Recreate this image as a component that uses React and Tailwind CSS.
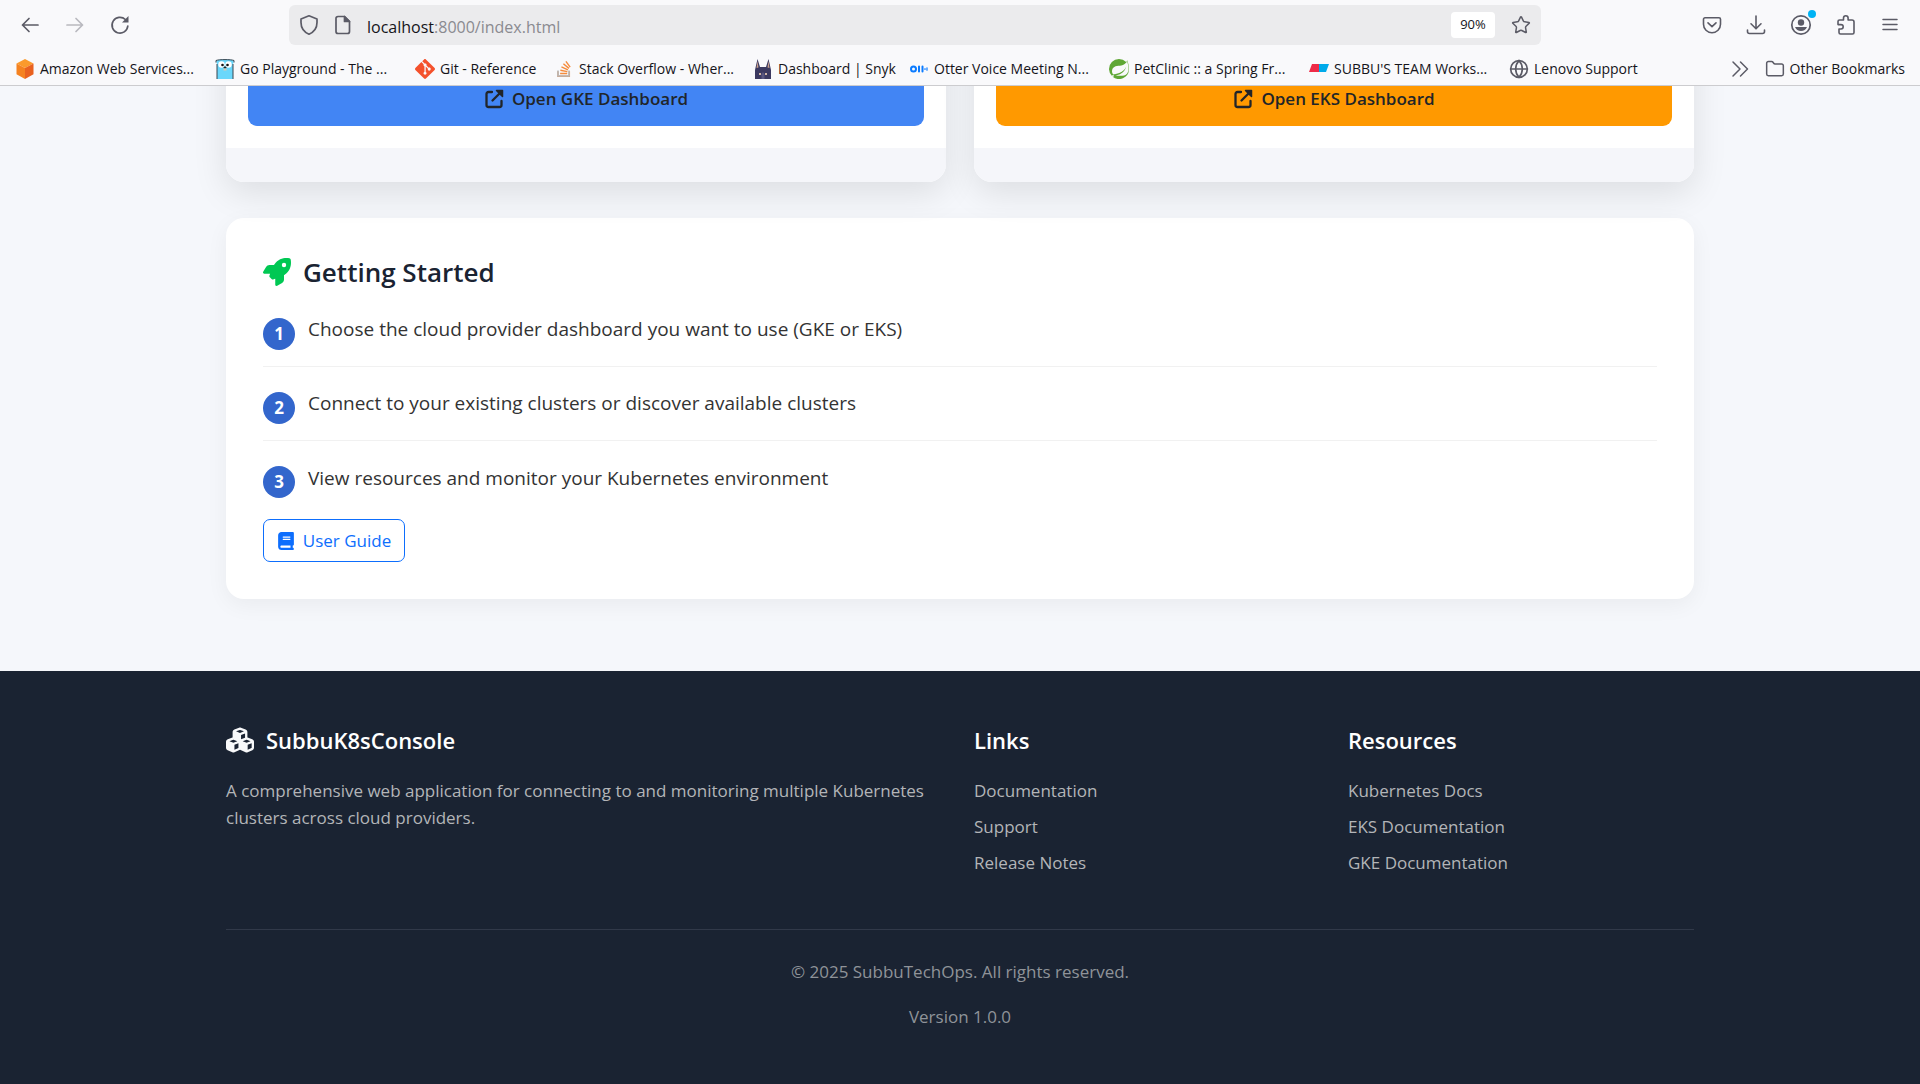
import { FaRocket, FaBook, FaCubes } from "react-icons/fa6";
import { SiGit, SiStackoverflow, SiSpring } from "react-icons/si";
import { Globe, Folder, Star } from "lucide-react";

const line = {
  fill: "none",
  stroke: "currentColor",
  strokeLinecap: "round",
  strokeLinejoin: "round",
};

function BackArrow() {
  return (
    <svg width="20" height="20" viewBox="0 0 20 20" {...line} strokeWidth="1.7">
      <path d="M9 3.5 2.5 10 9 16.5M2.5 10H18" />
    </svg>
  );
}

function ForwardArrow() {
  return (
    <svg width="20" height="20" viewBox="0 0 20 20" {...line} strokeWidth="1.7">
      <path d="m11 3.5 6.5 6.5-6.5 6.5M17.5 10H2" />
    </svg>
  );
}

function Reload() {
  return (
    <svg width="20" height="20" viewBox="0 0 20 20" {...line} strokeWidth="1.7">
      <path d="M17.8 11a7.9 7.9 0 1 1-2.400-6.500" />
      <path d="M18.500 1v6.500H12z" fill="currentColor" stroke="none" />
    </svg>
  );
}

function Shield() {
  return (
    <svg width="20" height="22" viewBox="0 0 20 22" {...line} strokeWidth="1.7">
      <path d="M10 1.8 18 5v3.5c0 5-3 9.5-8 11.7-5-2.200-8-6.700-8-11.700V5z" />
    </svg>
  );
}

function Page() {
  return (
    <svg width="16" height="20" viewBox="0 0 16 20" {...line} strokeWidth="1.7">
      <path d="M3 1.500h6.500l5 5V16.500a2 2 0 0 1-2 2H3a2 2 0 0 1-2-2v-13a2 2 0 0 1 2-2z" />
      <path d="M9.500 1.500v5h5z" fill="currentColor" />
    </svg>
  );
}

function Pocket() {
  return (
    <svg width="20" height="20" viewBox="0 0 20 20" {...line} strokeWidth="1.6">
      <path d="M3 2.800h14a1.500 1.500 0 0 1 1.500 1.500v5a8.500 8.500 0 0 1-17 0v-5A1.500 1.500 0 0 1 3 2.800z" />
      <path d="m6 7.800 4 3.800 4-3.800" />
    </svg>
  );
}

function Download() {
  return (
    <svg width="20" height="20" viewBox="0 0 20 20" {...line} strokeWidth="1.6">
      <path d="M10 1v12.500M5 8.800l5 5 5-5M1.500 15v1.500a2 2 0 0 0 2 2h13a2 2 0 0 0 2-2V15" />
    </svg>
  );
}

function Account() {
  return (
    <svg width="22" height="22" viewBox="0 0 22 22">
      <circle cx="11" cy="11" r="9.2" fill="none" stroke="currentColor" strokeWidth="1.7" />
      <circle cx="11" cy="8.500" r="3.200" fill="currentColor" />
      <path d="M5 13h12a6.500 6.500 0 0 1-12 0z" fill="currentColor" />
    </svg>
  );
}

function Puzzle() {
  return (
    <svg width="20" height="22" viewBox="0 0 20 22" {...line} strokeWidth="1.6">
      <path d="M3.500 6h4V4a2.300 2.300 0 0 1 4.600 0v2H16a2 2 0 0 1 2 2v10.500a1.500 1.500 0 0 1-1.500 1.500h-12A1.500 1.500 0 0 1 3 18.500V15h2a2.200 2.200 0 0 0 0-4.400H2V7.500A1.500 1.500 0 0 1 3.500 6z" />
    </svg>
  );
}

function Menu() {
  return (
    <svg width="16" height="16" viewBox="0 0 16 16" {...line} strokeWidth="1.500">
      <path d="M1 2.500h14M1 7.500h14M1 12.500h14" />
    </svg>
  );
}

function DoubleChevron() {
  return (
    <svg width="18" height="18" viewBox="0 0 18 18" {...line} strokeWidth="1.500">
      <path d="m2 2 7 7-7 7M9.500 2l7 7-7 7" />
    </svg>
  );
}

function OpenExternal() {
  return (
    <svg width="20" height="20" viewBox="0 0 20 20" {...line} strokeWidth="2.300">
      <path d="M8 3H4.500A2 2 0 0 0 2.500 5v11a2 2 0 0 0 2 2h11a2 2 0 0 0 2-2v-4" />
      <path d="M8.500 11.500 15 5" />
      <path d="M12.500 1.500h6v6z" fill="currentColor" strokeWidth="1.500" />
    </svg>
  );
}

function AwsCube() {
  return (
    <svg width="20" height="20" viewBox="0 0 20 20">
      <path d="M10 0 18.500 4.500 10 9 1.500 4.500z" fill="#fb9a2c" />
      <path d="M1.500 4.500 10 9v11l-8.500-4.800z" fill="#f58220" />
      <path d="M18.500 4.500 10 9v11l8.500-4.800z" fill="#e9611f" />
    </svg>
  );
}

function Gopher() {
  return (
    <svg width="20" height="20" viewBox="0 0 20 20">
      <path d="M1 1.500C3 0 17 0 19 1.500L18 5v15H2V5z" fill="#6ad7fb" />
      <path d="M1 3.500V1.500C4 .3 16 .3 19 1.500v2M2 5v15M18 5v15" fill="none" stroke="#39454f" />
      <circle cx="6.500" cy="5.500" r="3.200" fill="#fff" />
      <circle cx="13.500" cy="5.500" r="3.200" fill="#fff" />
      <circle cx="7.500" cy="6" r="1.300" fill="#111" />
      <circle cx="12.500" cy="6" r="1.300" fill="#111" />
      <ellipse cx="10" cy="8.500" rx="1.500" ry="1" fill="#222" />
      <path d="M8.500 9.500h3v2h-3z" fill="#d8cbb5" />
    </svg>
  );
}

function SnykDog() {
  return (
    <svg width="18" height="20" viewBox="0 0 18 20">
      <path d="M1 20V11L3.500 0 6 8h6l2.500-8L17 11v9z" fill="#3b3960" />
      <path d="M3.500 2 2.500 9l2-.5zM14.500 2l1 7-2-.5z" fill="#c9a08b" />
      <path d="M5 14h2v2H5zM11 14h2v2h-2z" fill="#d0b5a5" />
      <path d="M7.500 20V15L9 13l1.500 2v5z" fill="#595781" />
    </svg>
  );
}

function OtterMark() {
  return (
    <svg width="18" height="20" viewBox="0 0 18 20" fill="none" stroke="#0b7bff" strokeWidth="2" strokeLinecap="round">
      <circle cx="3.500" cy="10" r="2.500" />
      <path d="M9 7.500v5M12.500 7.500v5" />
      <path d="M15 9.500v1M17 8.800v2.400" strokeWidth="1.200" />
    </svg>
  );
}

function TeamMark() {
  return (
    <svg width="20" height="20" viewBox="0 0 20 20">
      <path d="M3 5h7v8H0z" fill="#ee2b47" />
      <path d="M10 5h10l-3 8h-7z" fill="#00aaea" />
    </svg>
  );
}

function StackMark() {
  return (
    <span className="relative flex">
      <SiStackoverflow size={16} color="#f58b3c" />
      <svg className="absolute inset-0" width="16" height="16" viewBox="0 0 16 16" fill="none" stroke="#b5b8bc" strokeWidth="1.600">
        <path d="M2 9.500V15h11V9.500" />
      </svg>
    </span>
  );
}

const bookmarks = [
  { label: "Amazon Web Services...", icon: <AwsCube />, box: "w-[200px]" },
  { label: "Go Playground - The ...", icon: <Gopher />, box: "w-[200px]" },
  { label: "Git - Reference", icon: <SiGit size={20} color="#f4512c" />, box: "w-[139px]" },
  { label: "Stack Overflow - Wher...", icon: <StackMark />, box: "w-[199px]" },
  { label: "Dashboard | Snyk", icon: <SnykDog />, box: "w-[156px]" },
  { label: "Otter Voice Meeting N...", icon: <OtterMark />, box: "w-[200px]" },
  { label: "PetClinic :: a Spring Fr...", icon: <SiSpring size={20} color="#5fa735" />, box: "w-[200px]" },
  { label: "SUBBU'S TEAM Works...", icon: <TeamMark />, box: "w-[200px]" },
  { label: "Lenovo Support", icon: <Globe size={20} strokeWidth={2} color="#5b5b66" />, box: "w-[150px]" },
];

function Toolbar() {
  return (
    <div className="flex h-[50px] items-center pr-[22px] pl-5 text-[#5b5b66]">
      <div className="flex w-[269px] shrink-0 items-center gap-[25px]">
        <button type="button" aria-label="Back"><BackArrow /></button>
        <button type="button" aria-label="Forward" className="text-[#b9b9bf]"><ForwardArrow /></button>
        <button type="button" aria-label="Reload"><Reload /></button>
      </div>
      <div className="flex h-10 min-w-0 flex-1 items-center gap-4 rounded-md bg-[#ebebed] px-[10px]">
        <Shield />
        <Page />
        <div className="relative flex-1 pt-[3px] text-[16px]">
          <input
            aria-label="Address"
            defaultValue="localhost:8000/index.html"
            className="w-full bg-transparent text-transparent outline-none"
          />
          <span aria-hidden="true" className="pointer-events-none absolute inset-0 pt-[3px] text-[#8a8a90]">
            <span className="text-[#15141a]">localhost</span>:8000/index.html
          </span>
        </div>
        <button type="button" className="h-[26px] w-11 rounded bg-white text-[13px] text-[#15141a]">90%</button>
        <button type="button" aria-label="Bookmark this page"><Star size={20} strokeWidth={1.8} /></button>
      </div>
      <div className="flex w-[357px] shrink-0 items-center justify-end gap-6">
        <button type="button" aria-label="Save to Pocket"><Pocket /></button>
        <button type="button" aria-label="Downloads"><Download /></button>
        <button type="button" aria-label="Account" className="relative">
          <Account />
          <span className="absolute -top-1 -right-1 size-2 rounded-full bg-[#00b3f4]" />
        </button>
        <button type="button" aria-label="Extensions"><Puzzle /></button>
        <button type="button" aria-label="Menu" className="ml-0.5"><Menu /></button>
      </div>
    </div>
  );
}

function BookmarksBar() {
  return (
    <nav aria-label="Bookmarks" className="flex h-9 items-center border-b border-[#cccccf] px-[15px] pt-0.5 text-[14px] text-[#15141a]">
      {bookmarks.map((b) => (
        <a key={b.label} href="#" className={"flex shrink-0 items-center gap-[5px] whitespace-nowrap " + b.box}>
          <span className="flex w-5 shrink-0 justify-center">{b.icon}</span>
          {b.label}
        </a>
      ))}
      <div className="ml-auto flex items-center gap-4">
        <button type="button" aria-label="More bookmarks" className="text-[#5b5b66]"><DoubleChevron /></button>
        <button type="button" className="flex items-center gap-[5px] whitespace-nowrap">
          <Folder size={20} strokeWidth={1.8} color="#5b5b66" />
          Other Bookmarks
        </button>
      </div>
    </nav>
  );
}

function ProviderCard({ label, color }) {
  return (
    <article className="overflow-hidden rounded-[18px] bg-white shadow-[0_11px_34px_rgba(0,0,0,0.1)]">
      <div className="px-[22px] pt-[66px] pb-[22px]">
        <a
          href="#"
          className={"flex h-[54px] w-full items-center justify-center gap-2 rounded-[9px] text-[17px] font-semibold text-[#212529] " + color}
        >
          <OpenExternal />
          {label}
        </a>
      </div>
      <div className="h-[34px] bg-[#f5f6fa]" />
    </article>
  );
}

const steps = [
  "Choose the cloud provider dashboard you want to use (GKE or EKS)",
  "Connect to your existing clusters or discover available clusters",
  "View resources and monitor your Kubernetes environment",
];

function GettingStarted() {
  return (
    <section className="mt-9 rounded-[18px] bg-white p-[37px] shadow-[0_6px_22px_rgba(0,0,0,0.05)]">
      <h2 className="flex h-[34px] items-center gap-3 text-[26px] font-semibold text-[#1a2332]">
        <FaRocket size={28} color="#00c853" />
        Getting Started
      </h2>
      <ol className="mt-1">
        {steps.map((step, i) => (
          <li key={step} className="flex h-[74px] items-center gap-[13px] border-b border-[#f1f1f1] text-[19px] text-[#333333] last:border-b-0">
            <span className="mt-2 flex size-8 items-center justify-center rounded-full bg-[#3366cc] text-[17px] font-bold text-white">
              {i + 1}
            </span>
            {step}
          </li>
        ))}
      </ol>
      <a
        href="#"
        className="mt-1 flex h-[43px] w-[142px] items-center justify-center gap-2 rounded-[7px] border border-[#0d6efd] text-[17px] text-[#0d6efd]"
      >
        <FaBook size={18} />
        User Guide
      </a>
    </section>
  );
}

function LinkColumn({ title, links }) {
  return (
    <div>
      <h3 className="text-[22px] leading-8 font-semibold text-white">{title}</h3>
      <ul className="mt-[21px]">
        {links.map((l) => (
          <li key={l} className="h-9">
            <a href="#" className="text-[17px]">{l}</a>
          </li>
        ))}
      </ul>
    </div>
  );
}

function Footer() {
  return (
    <footer className="mt-[72px] flex-1 bg-[#1a2332] pt-[53px] text-[17px] leading-[27px] text-[#b3b5b8]">
      <div className="mx-auto max-w-[1468px]">
        <div className="grid grid-cols-4 gap-7">
          <div className="col-span-2">
            <h3 className="flex items-center gap-3 text-[22px] leading-8 font-semibold text-white">
              <FaCubes size={28} color="#f8f9fa" />
              SubbuK8sConsole
            </h3>
            <p className="mt-[21px]">
              A comprehensive web application for connecting to and monitoring multiple Kubernetes clusters across cloud providers.
            </p>
          </div>
          <LinkColumn title="Links" links={["Documentation", "Support", "Release Notes"]} />
          <LinkColumn title="Resources" links={["Kubernetes Docs", "EKS Documentation", "GKE Documentation"]} />
        </div>
        <div className="mt-11 border-t border-[#313949] pt-7 text-center text-[#8f9399]">
          <p>© 2025 SubbuTechOps. All rights reserved.</p>
          <p className="mt-[18px]">Version 1.0.0</p>
        </div>
      </div>
    </footer>
  );
}

export default function App() {
  return (
    <div className="flex h-screen flex-col overflow-hidden bg-[#f5f7fb] font-['Open_Sans','Noto_Sans',sans-serif]">
      <header className="z-10 shrink-0 bg-[#f9f9fb]">
        <Toolbar />
        <BookmarksBar />
      </header>
      <div className="flex min-h-0 flex-1 flex-col overflow-hidden">
        <main className="mx-auto w-full max-w-[1468px]">
          <div className="-mt-20 grid grid-cols-2 gap-7">
            <ProviderCard label="Open GKE Dashboard" color="bg-[#4285f4]" />
            <ProviderCard label="Open EKS Dashboard" color="bg-[#ff9900]" />
          </div>
          <GettingStarted />
        </main>
        <Footer />
      </div>
    </div>
  );
}
